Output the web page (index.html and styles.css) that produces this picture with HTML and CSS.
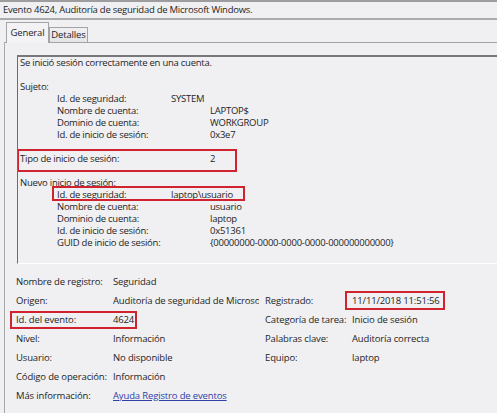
FILE: index.html
```html
<!DOCTYPE html>
<html lang="es">
<head>
<meta charset="utf-8">
<title>Evento 4624</title>
<link rel="stylesheet" href="styles.css">
</head>
<body>
<div class="window">
  <div class="title">Evento 4624, Auditoría de seguridad de Microsoft Windows.</div>
  <div class="tabs">
    <div class="tab active">General</div>
    <div class="tab">Detalles</div>
  </div>
  <div class="panel">
    <div class="desc">
      <div class="line">Se inició sesión correctamente en una cuenta.</div>
      <div class="line"></div>
      <div class="line">Sujeto:</div>
      <div class="line ind"><span class="k sid">Id. de seguridad:</span><span>SYSTEM</span></div>
      <div class="line ind"><span class="k">Nombre de cuenta:</span><span>LAPTOP$</span></div>
      <div class="line ind"><span class="k">Dominio de cuenta:</span><span>WORKGROUP</span></div>
      <div class="line ind"><span class="k">Id. de inicio de sesión:</span><span>0x3e7</span></div>
      <div class="line"></div>
      <div class="line marked"><span class="k wide">Tipo de inicio de sesión:</span><span>2</span><span class="mark mark-tipo"></span></div>
      <div class="line"></div>
      <div class="line">Nuevo inicio de sesión:</div>
      <div class="line ind marked"><span class="k sid">Id. de seguridad:</span><span>laptop\usuario</span><span class="mark mark-sid"></span></div>
      <div class="line ind"><span class="k">Nombre de cuenta:</span><span>usuario</span></div>
      <div class="line ind"><span class="k">Dominio de cuenta:</span><span>laptop</span></div>
      <div class="line ind"><span class="k">Id. de inicio de sesión:</span><span>0x51361</span></div>
      <div class="line ind"><span class="k">GUID de inicio de sesión:</span><span>{00000000-0000-0000-0000-000000000000}</span></div>
      <div class="line"></div>
      <div class="line">Información de inicio de sesión:</div>
    </div>
    <div class="props">
      <div class="cell">Nombre de registro:</div>
      <div class="cell">Seguridad</div>
      <div class="cell"></div>
      <div class="cell"></div>

      <div class="cell">Origen:</div>
      <div class="cell clip">Auditoría de seguridad de Microsoft Windows</div>
      <div class="cell">Registrado:</div>
      <div class="cell marked">11/11/2018 11:51:56<span class="mark mark-date"></span></div>

      <div class="cell marked">Id. del evento:<span class="mark mark-id"></span></div>
      <div class="cell">4624</div>
      <div class="cell">Categoría de tarea:</div>
      <div class="cell">Inicio de sesión</div>

      <div class="cell">Nivel:</div>
      <div class="cell">Información</div>
      <div class="cell">Palabras clave:</div>
      <div class="cell">Auditoría correcta</div>

      <div class="cell">Usuario:</div>
      <div class="cell">No disponible</div>
      <div class="cell">Equipo:</div>
      <div class="cell">laptop</div>

      <div class="cell">Código de operación:</div>
      <div class="cell">Información</div>
      <div class="cell"></div>
      <div class="cell"></div>

      <div class="cell">Más información:</div>
      <div class="cell span3"><a class="link" href="#">Ayuda Registro de eventos</a></div>
    </div>
  </div>
</div>
</body>
</html>
```

FILE: styles.css
```css
* { box-sizing: border-box; }

html, body {
  margin: 0;
  padding: 0;
  overflow: hidden;
}

body {
  width: 497px;
  height: 413px;
  background: #f0eff2;
  font-family: "Open Sans", "Noto Sans", sans-serif;
  font-size: 9.5px;
  letter-spacing: -0.15px;
  color: #1f1f1f;
}

.window {
  width: 497px;
  height: 413px;
  overflow: hidden;
}

.title {
  height: 20px;
  border-top: 2px solid #9d9d9f;
  border-bottom: 2px solid #ababad;
  padding-left: 3px;
  line-height: 16px;
  white-space: nowrap;
  letter-spacing: -0.25px;
}

.tabs {
  display: flex;
  align-items: flex-end;
  height: 22px;
  padding-left: 6px;
}

.tab {
  position: relative;
  border: 1px solid #a4a4a6;
  border-bottom: none;
  text-align: center;
  line-height: 12px;
  white-space: nowrap;
}

.tab.active {
  width: 43px;
  height: 21px;
  margin-bottom: -1px;
  padding-top: 4px;
  background: #f3f2f5;
  z-index: 1;
}

.tab:not(.active) {
  width: 39px;
  height: 15px;
  padding-top: 1px;
  background: linear-gradient(#f0eff2, #e4e3e6);
}

.panel {
  margin-left: 4px;
  border-top: 1px solid #a4a4a6;
  border-left: 1px solid #a8a8aa;
  padding-top: 12px;
  height: 371px;
}

.desc {
  margin-left: 12px;
  width: 600px;
  height: 209px;
  border-top: 2px solid #78787a;
  border-left: 1px solid #6c6c6e;
  border-bottom: 1px solid #ffffff;
  padding-left: 2px;
  overflow: hidden;
  letter-spacing: -0.25px;
}

.line {
  display: flex;
  height: 12px;
  line-height: 12px;
  white-space: nowrap;
}

.line.ind { padding-left: 37px; }

.k { width: 153px; flex: none; }
.k.sid { width: 114px; }
.k.wide { width: 190px; }

.marked { position: relative; }

.mark {
  position: absolute;
  border: 2px solid #d1232e;
  pointer-events: none;
}

.mark-tipo { left: -3px; top: -4px; width: 220px; height: 23px; }
.mark-sid { left: 32px; top: -3px; width: 193px; height: 15px; }
.mark-id { left: -6px; top: 1px; width: 127px; height: 18px; }
.mark-date { left: -7px; top: 0; width: 100px; height: 19px; }

.props {
  display: grid;
  grid-template-columns: 97px 152px 87px 1fr;
  grid-auto-rows: 19px;
  padding: 8px 0 0 11px;
}

.cell {
  line-height: 19px;
  white-space: nowrap;
}

.cell.clip {
  overflow: hidden;
  margin-right: 6px;
}

.span3 { grid-column: span 3; }

.link {
  color: #2f3fa6;
  text-decoration: underline;
}
```
